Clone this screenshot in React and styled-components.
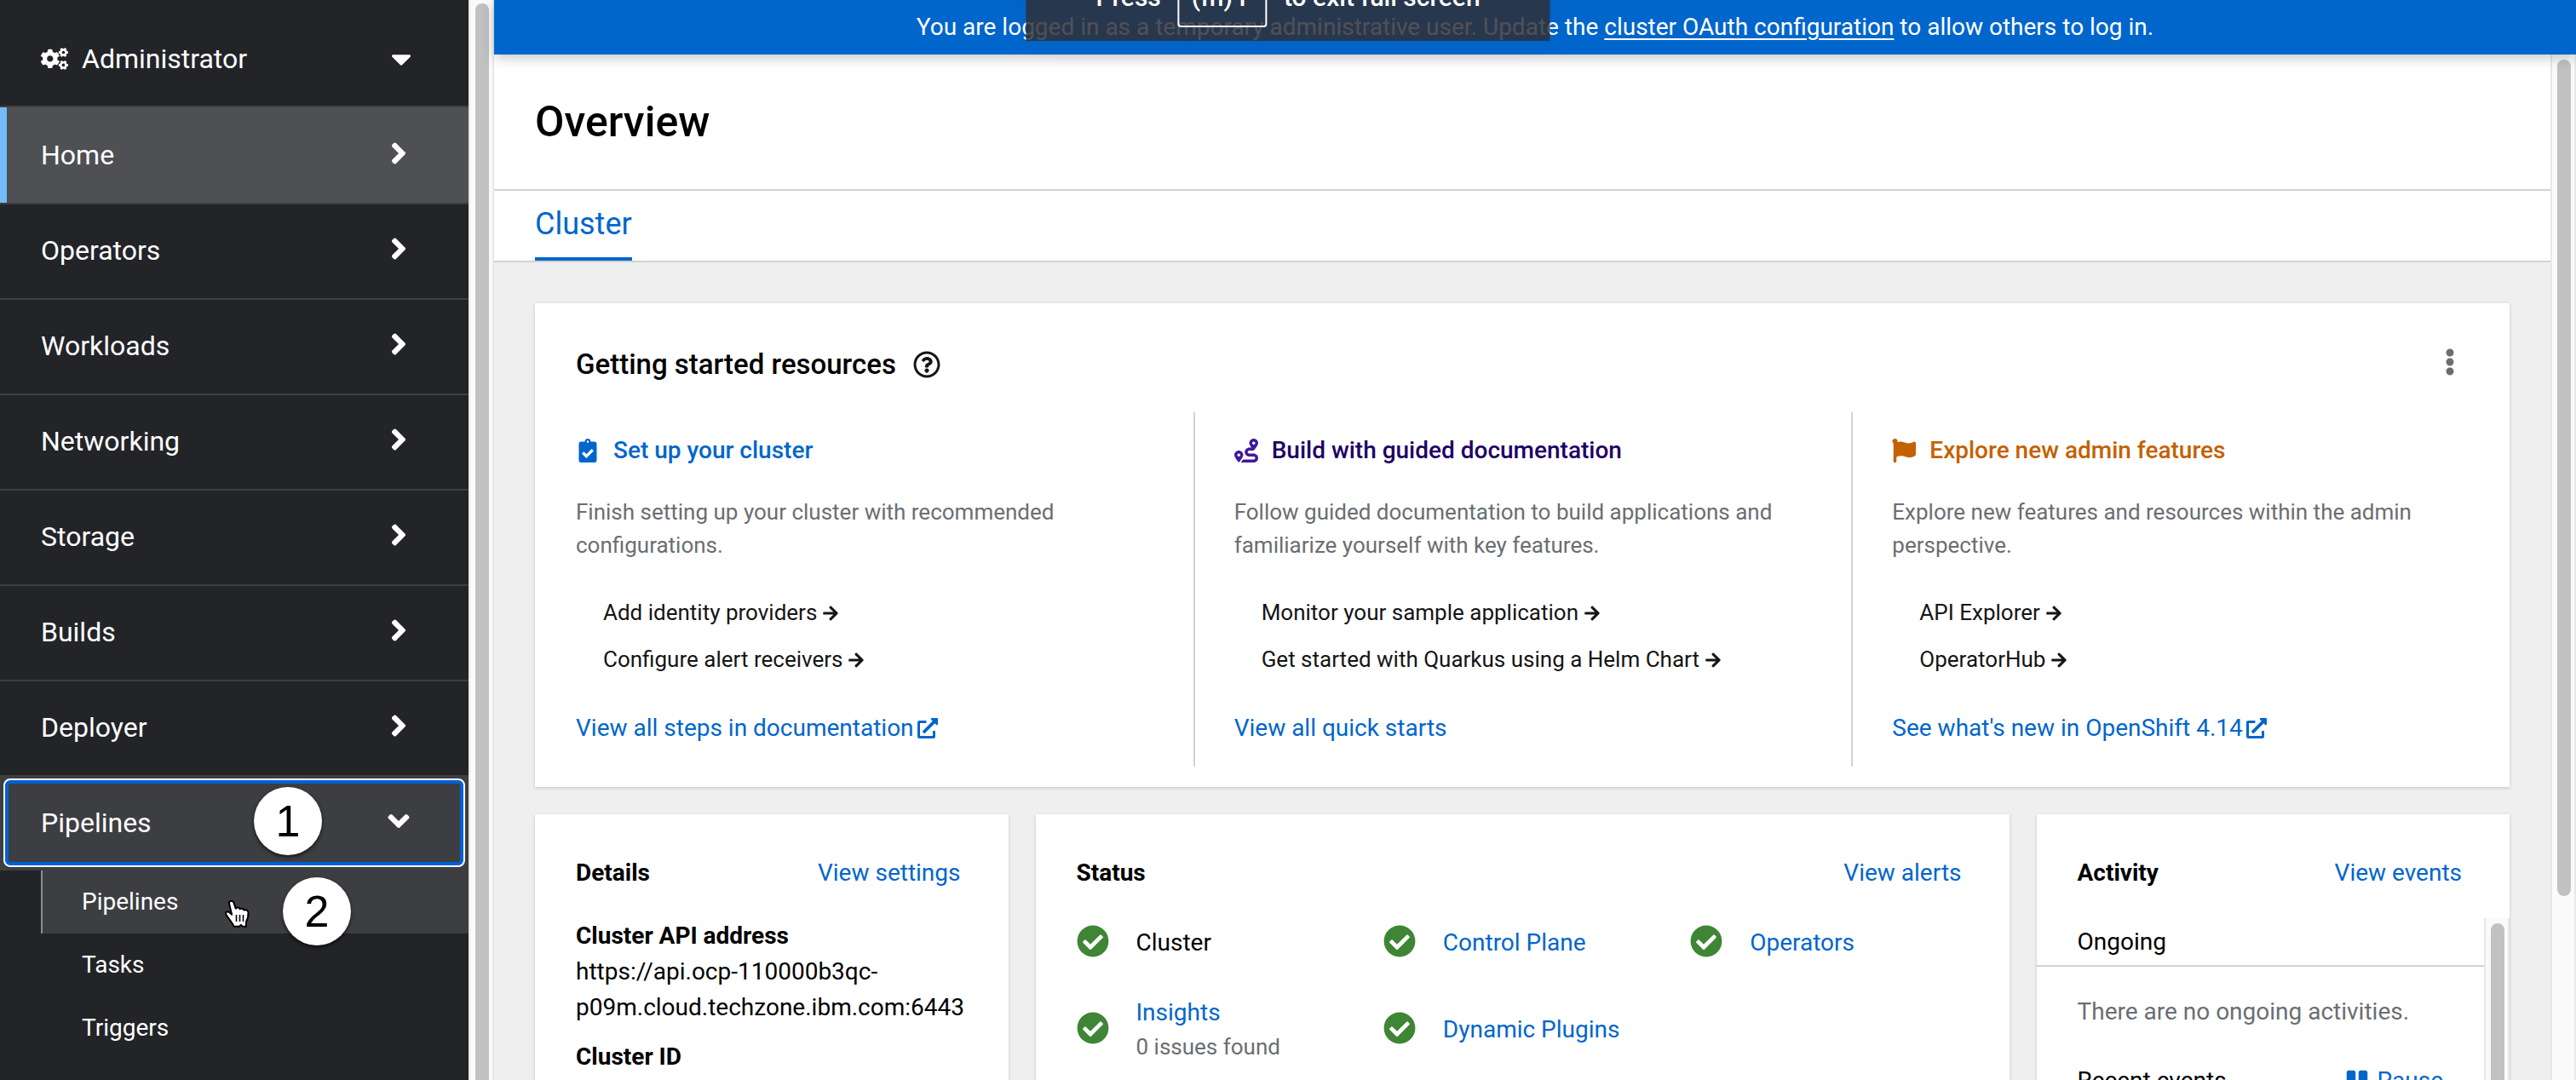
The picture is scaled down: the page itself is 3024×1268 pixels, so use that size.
import React from 'react';
import styled, { createGlobalStyle, css } from 'styled-components';
import {
  FaCogs,
  FaCaretDown,
  FaAngleRight,
  FaAngleDown,
  FaClipboardCheck,
  FaRoute,
  FaFlag,
  FaArrowRight,
  FaExternalLinkAlt,
  FaCheckCircle,
  FaEllipsisV,
  FaPause,
  FaRegQuestionCircle,
} from 'react-icons/fa';

const GlobalStyle = createGlobalStyle`
  *, *::before, *::after { box-sizing: border-box; }
  body {
    margin: 0;
    overflow: hidden;
    font-family: Roboto, "Liberation Sans", sans-serif;
    font-size: 28px;
    line-height: 42px;
    color: #151515;
  }
  h1, h2, h3, p, ul, dl, dd { margin: 0; padding: 0; }
  ul { list-style: none; }
  button {
    border: 0;
    padding: 0;
    background: none;
    font: inherit;
    color: inherit;
    cursor: pointer;
  }
  svg { flex: none; display: block; }
`;

const Shell = styled.div`
  display: flex;
  height: 100vh;
  overflow: hidden;
`;

/* ---------- scroll bars ---------- */

const Track = styled.div`
  flex: none;
  width: 30px;
  padding: ${(p) => p.$inset}px 6px 0;
  background: #fafafa;
  border: solid #e8e8e8;
  border-width: 0 2px;
`;

const Thumb = styled.div`
  width: 16px;
  height: ${(p) => p.$length};
  border-radius: 8px;
  background: #c1c1c1;
`;

function ScrollBar({ inset = 6, length = '110%' }) {
  return (
    <Track $inset={inset} aria-hidden="true">
      <Thumb $length={length} />
    </Track>
  );
}

/* ---------- side navigation ---------- */

const Sidebar = styled.aside`
  flex: none;
  width: 550px;
  background: #232428;
  color: #fff;
`;

const Perspective = styled.button`
  display: flex;
  align-items: center;
  gap: 16px;
  width: 100%;
  height: 126px;
  padding: 14px 60px 0 48px;
  border-bottom: 2px solid #3d3e42;
  font-size: 32px;
`;

const Grow = styled.span`
  flex: 1;
  text-align: left;
`;

const NavItem = styled.li`
  & + & > button { box-shadow: inset 0 2px #3d3e42; }
`;

const NavButton = styled.button`
  position: relative;
  display: flex;
  align-items: center;
  width: 100%;
  height: 112px;
  padding: 0 62px 0 48px;
  font-size: 32px;
  svg { margin-bottom: 4px; }
  ${(p) => p.$current && css`
    background: #4f5053;
    &::before {
      content: '';
      position: absolute;
      inset: 0 auto 0 0;
      width: 8px;
      background: #73bcf7;
    }
  `}
  ${(p) => p.$open && css`
    background: #3d3e42;
    &::after {
      content: '';
      position: absolute;
      inset: 4px;
      border: 2px solid #fff;
      border-radius: 8px;
      box-shadow: inset 0 0 0 4px #0060d6;
    }
  `}
`;

const SubList = styled.ul`
  margin-left: 48px;
`;

const SubLink = styled.a`
  position: relative;
  display: flex;
  align-items: center;
  height: 74px;
  padding-left: 46px;
  border-left: 2px solid ${(p) => (p.$active ? '#8a8d90' : 'transparent')};
  background: ${(p) => (p.$active ? '#3d3e42' : 'transparent')};
  color: #fff;
  text-decoration: none;
`;

const Callout = styled.span`
  position: absolute;
  z-index: 2;
  left: ${(p) => p.$left}px;
  top: ${(p) => p.$top}px;
  display: grid;
  place-items: center;
  width: 80px;
  height: 80px;
  border-radius: 50%;
  background: #fff;
  color: #000;
  box-shadow: 0 2px 4px rgba(0, 0, 0, 0.7);
  font: 52px/80px "Liberation Sans", Arial, sans-serif;
`;

const Pointer = styled.svg`
  position: absolute;
  left: 212px;
  top: 34px;
`;

function HandPointer() {
  return (
    <Pointer width="34" height="38" viewBox="0 0 34 38" aria-hidden="true">
      <path
        d="M8.500 2c2-.8 3.400.3 4 2.200l2.300 6.500c.5-1.600 4.300-1.600 4.900.7 1.200-1.200 4-.8 4.600 1.200 1.700-1 5.100.2 5.200 2.800.1 4.300-.6 7.600-2.500 10.800v5.500h-4.700l-1.300-1.800-2.200 1.800h-6.300c-1-3.500-4.200-6.500-6.200-9.700-1.300-2-3.100-3.600-3.300-5.600-.2-1.800 2.600-2.800 4.500-1.100l2.600 2.400L7 5c-.4-1.400.3-2.600 1.500-3z"
        fill="#fff"
        stroke="#000"
        strokeWidth="2"
        strokeLinejoin="round"
      />
      <path d="M15.500 18v8M19.500 18v8M23.500 18v8" stroke="#000" strokeWidth="1.600" />
    </Pointer>
  );
}

/* ---------- main column ---------- */

const Main = styled.div`
  flex: 1;
  min-width: 0;
  display: flex;
  flex-direction: column;
`;

const Banner = styled.div`
  position: relative;
  z-index: 1;
  flex: none;
  height: 64px;
  line-height: 64px;
  text-align: center;
  white-space: nowrap;
  background: #06c;
  color: #fff;
  box-shadow: 0 4px 14px rgba(0, 0, 0, 0.22);
  a { color: inherit; text-underline-offset: 4px; }
`;

const FullScreenHint = styled.div`
  position: absolute;
  z-index: 3;
  top: -54px;
  left: 50%;
  transform: translateX(-50%);
  display: flex;
  align-items: center;
  gap: 20px;
  height: 102px;
  padding: 0 82px;
  background: rgba(46, 46, 54, 0.84);
  box-shadow: 0 0 40px rgba(0, 0, 0, 0.06);
  color: #fff;
  font-size: 30px;
  font-weight: 500;
  white-space: nowrap;
`;

const Key = styled.kbd`
  padding: 0 14px;
  border: 2px solid #fff;
  border-radius: 4px;
  font: inherit;
  line-height: 66px;
`;

const Viewport = styled.div`
  flex: 1;
  min-height: 0;
  display: flex;
`;

const Page = styled.main`
  flex: 1;
  min-width: 0;
  overflow: hidden;
  background: #efefef;
`;

const PageHeader = styled.header`
  padding: 48px;
  background: #fff;
  border-bottom: 2px solid #d2d2d2;
  h1 {
    font-size: 50px;
    line-height: 62px;
    font-weight: 500;
    color: #000;
  }
`;

const Tabs = styled.nav`
  display: flex;
  padding: 0 48px;
  background: #fff;
  border-bottom: 2px solid #d2d2d2;
`;

const Tab = styled.a`
  border-bottom: 4px solid #06c;
  color: #06c;
  font-size: 36px;
  line-height: 78px;
  text-decoration: none;
`;

const Content = styled.div`
  display: flex;
  flex-direction: column;
  gap: 32px;
  padding: 48px;
`;

const Card = styled.section`
  background: #fff;
  box-shadow: 0 2px 4px rgba(3, 3, 3, 0.12), 0 0 4px rgba(3, 3, 3, 0.06);
`;

const StartHeader = styled.div`
  display: flex;
  align-items: center;
  gap: 20px;
  padding: 48px 54px 32px 48px;
  h2 {
    font-size: 33px;
    line-height: 48px;
    font-weight: 500;
    color: #000;
  }
`;

const KebabButton = styled.button`
  margin-left: auto;
  margin-bottom: 6px;
  color: #6a6e73;
`;

const Columns = styled.div`
  display: grid;
  grid-template-columns: repeat(3, 1fr);
  padding-bottom: 24px;
`;

const Column = styled.div`
  padding: 24px 48px 24px 46px;
  border-left: 2px solid transparent;
  & + & { border-left-color: #d2d2d2; }
`;

const ColumnTitle = styled.h3`
  display: flex;
  align-items: center;
  gap: 16px;
  color: ${(p) => p.$color};
  font-size: 28px;
  font-weight: 500;
  svg { color: ${(p) => p.$iconColor || p.$color}; }
`;

const Blurb = styled.p`
  margin: 32px 0 40px;
  color: #6a6e73;
  font-size: 26px;
  line-height: 39px;
`;

const Steps = styled.ul`
  display: grid;
  gap: 16px;
  margin-bottom: 40px;
  padding-left: 32px;
  font-size: 26px;
  line-height: 39px;
`;

const StepLink = styled.a`
  display: flex;
  align-items: center;
  gap: 6px;
  color: #151515;
  text-decoration: none;
`;

const TextLink = styled.a`
  display: inline-flex;
  align-items: center;
  gap: 4px;
  color: #06c;
  text-decoration: none;
`;

const Dashboard = styled.div`
  display: grid;
  grid-template-columns: repeat(12, 1fr);
  gap: 32px;
`;

const Tile = styled(Card)`
  grid-column: span ${(p) => p.$span};
  height: 640px;
`;

const TileHeader = styled.div`
  display: flex;
  justify-content: space-between;
  padding: 48px 56px 32px 48px;
  h2 {
    font-size: 28px;
    font-weight: 700;
    color: #000;
  }
`;

const Facts = styled.dl`
  padding: 0 48px;
  color: #000;
  dt { font-weight: 700; }
  dd { margin-bottom: 16px; }
`;

const StatusGrid = styled.div`
  display: grid;
  grid-template-columns: repeat(3, 1fr);
  row-gap: 40px;
  padding: 8px 14px 0 48px;
`;

const StatusItem = styled.div`
  display: flex;
  align-items: center;
  gap: 32px;
  color: #000;
  svg { color: #3e8635; margin: -8px 0 -4px; }
  small {
    display: block;
    color: #6a6e73;
    font-size: 26px;
    line-height: 39px;
  }
`;

const Feed = styled.div`
  display: flex;
  height: 562px;
`;

const FeedBody = styled.div`
  flex: 1;
  color: #000;
`;

const FeedHeading = styled.div`
  display: flex;
  justify-content: space-between;
  padding: 7px 48px 6px;
  border-bottom: 2px solid #d2d2d2;
`;

const Empty = styled.p`
  padding: 32px 0 32px 48px;
  color: #6a6e73;
  white-space: nowrap;
`;

const PauseButton = styled.button`
  display: flex;
  align-items: center;
  gap: 10px;
  color: #06c;
`;

const sections = ['Home', 'Operators', 'Workloads', 'Networking', 'Storage', 'Builds', 'Deployer'];

const resources = [
  {
    title: 'Set up your cluster',
    Icon: FaClipboardCheck,
    color: '#0066cc',
    text: 'Finish setting up your cluster with recommended configurations.',
    steps: ['Add identity providers', 'Configure alert receivers'],
    more: 'View all steps in documentation',
    external: true,
  },
  {
    title: 'Build with guided documentation',
    Icon: FaRoute,
    color: '#1f0066',
    iconColor: '#40199a',
    text: 'Follow guided documentation to build applications and familiarize yourself with key features.',
    steps: ['Monitor your sample application', 'Get started with Quarkus using a Helm Chart'],
    more: 'View all quick starts',
  },
  {
    title: 'Explore new admin features',
    Icon: FaFlag,
    color: '#c46100',
    text: 'Explore new features and resources within the admin perspective.',
    steps: ['API Explorer', 'OperatorHub'],
    more: "See what's new in OpenShift 4.14",
    external: true,
  },
];

const statuses = [
  { name: 'Cluster', plain: true },
  { name: 'Control Plane' },
  { name: 'Operators' },
  { name: 'Insights', note: '0 issues found' },
  { name: 'Dynamic Plugins' },
];

function SideNav() {
  return (
    <Sidebar>
      <Perspective type="button">
        <FaCogs size={32} />
        <Grow>Administrator</Grow>
        <FaCaretDown size={38} />
      </Perspective>
      <nav>
        <ul>
          {sections.map((name) => (
            <NavItem key={name}>
              <NavButton type="button" $current={name === 'Home'}>
                <Grow>{name}</Grow>
                <FaAngleRight size={40} />
              </NavButton>
            </NavItem>
          ))}
          <NavItem>
            <NavButton type="button" $open aria-expanded="true">
              <Grow>Pipelines</Grow>
              <Callout $left={298} $top={14}>1</Callout>
              <FaAngleDown size={40} />
            </NavButton>
            <SubList>
              <li>
                <SubLink href="#pipelines" $active>
                  Pipelines
                  <HandPointer />
                  <Callout $left={282} $top={8}>2</Callout>
                </SubLink>
              </li>
              <li><SubLink href="#tasks">Tasks</SubLink></li>
              <li><SubLink href="#triggers">Triggers</SubLink></li>
            </SubList>
          </NavItem>
        </ul>
      </nav>
    </Sidebar>
  );
}

function GettingStarted() {
  return (
    <Card>
      <StartHeader>
        <h2>Getting started resources</h2>
        <button type="button" aria-label="Help"><FaRegQuestionCircle size={32} /></button>
        <KebabButton type="button" aria-label="Actions"><FaEllipsisV size={32} /></KebabButton>
      </StartHeader>
      <Columns>
        {resources.map(({ title, Icon, color, iconColor, text, steps, more, external }) => (
          <Column key={title}>
            <ColumnTitle $color={color} $iconColor={iconColor}>
              <Icon size={28} />
              {title}
            </ColumnTitle>
            <Blurb>{text}</Blurb>
            <Steps>
              {steps.map((step) => (
                <li key={step}>
                  <StepLink href="#step">{step}<FaArrowRight size={20} /></StepLink>
                </li>
              ))}
            </Steps>
            <TextLink href="#more">{more}{external && <FaExternalLinkAlt size={24} />}</TextLink>
          </Column>
        ))}
      </Columns>
    </Card>
  );
}

export default function App() {
  return (
    <>
      <GlobalStyle />
      <Shell>
        <SideNav />
        <ScrollBar inset={4} />
        <Main>
          <Banner>
            You are logged in as a temporary administrative user. Update the{' '}
            <a href="#oauth">cluster OAuth configuration</a> to allow others to log in.
          </Banner>
          <Viewport>
            <Page>
              <PageHeader><h1>Overview</h1></PageHeader>
              <Tabs><Tab href="#cluster">Cluster</Tab></Tabs>
              <Content>
                <GettingStarted />
                <Dashboard>
                  <Tile $span={3}>
                    <TileHeader>
                      <h2>Details</h2>
                      <TextLink href="#settings">View settings</TextLink>
                    </TileHeader>
                    <Facts>
                      <dt>Cluster API address</dt>
                      <dd>https://api.ocp-110000b3qc-p09m.cloud.techzone.ibm.com:6443</dd>
                      <dt>Cluster ID</dt>
                    </Facts>
                  </Tile>
                  <Tile $span={6}>
                    <TileHeader>
                      <h2>Status</h2>
                      <TextLink href="#alerts">View alerts</TextLink>
                    </TileHeader>
                    <StatusGrid>
                      {statuses.map(({ name, plain, note }) => (
                        <StatusItem key={name}>
                          <FaCheckCircle size={38} />
                          <div>
                            {plain ? name : <TextLink href="#status">{name}</TextLink>}
                            {note && <small>{note}</small>}
                          </div>
                        </StatusItem>
                      ))}
                    </StatusGrid>
                  </Tile>
                  <Tile $span={3}>
                    <TileHeader>
                      <h2>Activity</h2>
                      <TextLink href="#events">View events</TextLink>
                    </TileHeader>
                    <Feed>
                      <FeedBody>
                        <FeedHeading>Ongoing</FeedHeading>
                        <Empty>There are no ongoing activities.</Empty>
                        <FeedHeading>
                          Recent events
                          <PauseButton type="button"><FaPause size={28} />Pause</PauseButton>
                        </FeedHeading>
                      </FeedBody>
                      <ScrollBar />
                    </Feed>
                  </Tile>
                </Dashboard>
              </Content>
            </Page>
            <ScrollBar length="82%" />
          </Viewport>
        </Main>
      </Shell>
      <FullScreenHint>
        Press <Key>(fn) F</Key> to exit full screen
      </FullScreenHint>
    </>
  );
}
